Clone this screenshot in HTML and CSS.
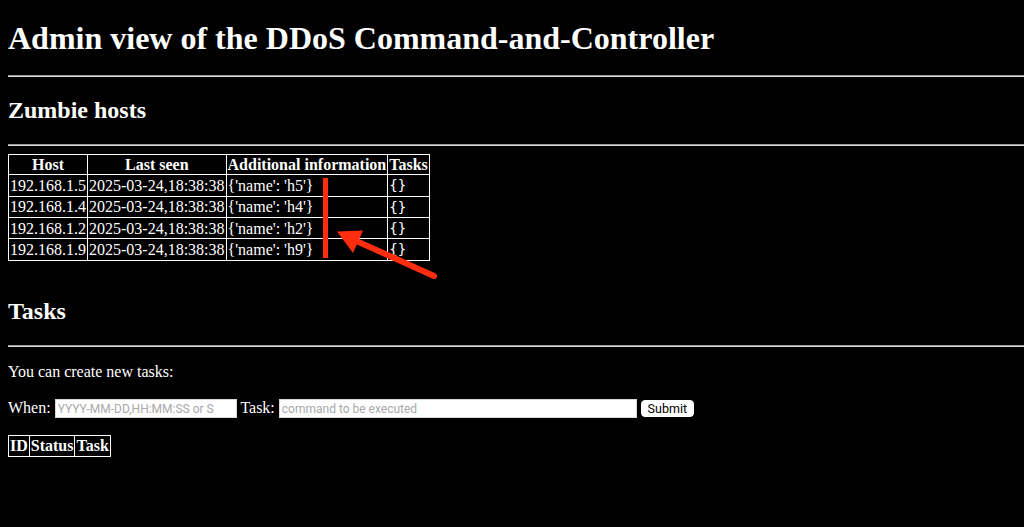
FILE: index.html
```html
<!DOCTYPE html>
<html>
<head>
<meta charset="utf-8">
<title>Admin view</title>
<link rel="stylesheet" href="styles.css">
</head>
<body>
<h1 class="title">Admin view of the DDoS Command-and-Controller</h1>
<hr class="rule">
<h2 class="section">Zumbie hosts</h2>
<hr class="rule">
<table class="grid hosts">
  <tr><th>Host</th><th>Last seen</th><th>Additional information</th><th>Tasks</th></tr>
  <tr><td>192.168.1.5</td><td>2025-03-24,18:38:38</td><td>{'name': 'h5'}</td><td><span class="braces">{}</span></td></tr>
  <tr><td>192.168.1.4</td><td>2025-03-24,18:38:38</td><td>{'name': 'h4'}</td><td><span class="braces">{}</span></td></tr>
  <tr><td>192.168.1.2</td><td>2025-03-24,18:38:38</td><td>{'name': 'h2'}</td><td><span class="braces">{}</span></td></tr>
  <tr><td>192.168.1.9</td><td>2025-03-24,18:38:38</td><td>{'name': 'h9'}</td><td><span class="braces">{}</span></td></tr>
</table>
<h2 class="section tasks-title">Tasks</h2>
<hr class="rule">
<p class="para intro">You can create new tasks:</p>
<form class="para task-form">
  <label>When: <input class="field when" type="text" placeholder="YYYY-MM-DD,HH:MM:SS or S"></label>
  <label>Task: <input class="field task" type="text" placeholder="command to be executed"></label>
  <button class="submit" type="button">Submit</button>
</form>
<table class="grid">
  <tr><th>ID</th><th>Status</th><th>Task</th></tr>
</table>
<svg class="annotation" width="1024" height="527" viewBox="0 0 1024 527" xmlns="http://www.w3.org/2000/svg">
  <line x1="325.5" y1="178" x2="325.5" y2="258" stroke="#ff2d0f" stroke-width="5"/>
  <line x1="434" y1="276" x2="352" y2="239" stroke="#ff2d0f" stroke-width="6" stroke-linecap="round"/>
  <polygon points="337,231.5 363,230.5 353,253" fill="#ff2d0f"/>
</svg>
</body>
</html>
```
FILE: styles.css
```css
html, body {
  background: #000;
}
body {
  margin: 0 0 8px 8px;
  padding: 0;
  color: #fff;
  font-family: "Liberation Serif", "Times New Roman", serif;
  font-size: 16px;
}
.title {
  font-size: 32px;
  line-height: 32px;
  margin: 21.44px 0;
  padding-top: 0.1px;
  font-weight: bold;
}
.section {
  font-size: 24px;
  line-height: 27px;
  margin: 19.92px 0;
  font-weight: bold;
}
.tasks-title {
  margin-top: 37px;
}
.rule {
  display: block;
  margin: 8px 0;
  border: 0;
  border-top: 1px solid #9a9a9a;
  border-bottom: 1px solid #d8d8d8;
  height: 0;
}
.grid {
  border-collapse: collapse;
}
.grid th, .grid td {
  border: 1px solid #fff;
  padding: 1px;
  line-height: 18px;
  color: #fff;
}
.grid th {
  font-weight: bold;
  text-align: center;
}
.grid td {
  text-align: left;
}
.hosts th, .hosts td {
  line-height: 17.4px;
}
.braces {
  color: #fff;
  font-family: "DejaVu Sans Mono", "Liberation Mono", monospace;
  font-size: 14px;
}
.para {
  margin: 16px 0;
  line-height: 18px;
}
.task-form {
  display: block;
  margin-top: 18px;
  margin-bottom: 17px;
}
.field {
  font-family: Roboto, "Liberation Sans", Arial, sans-serif;
  font-size: 12px;
  height: 19px;
  box-sizing: border-box;
  padding: 1px 2px;
  border: 1px solid #d6d6d6;
  background: #fff;
  color: #000;
  vertical-align: baseline;
  outline: none;
}
.field::placeholder {
  color: #a9a9a9;
}
.field.when {
  width: 182px;
}
.field.task {
  width: 358px;
}
.submit {
  font-family: Roboto, "Liberation Sans", Arial, sans-serif;
  font-size: 12.5px;
  height: 17px;
  width: 53px;
  padding: 0 4px;
  border: 1px solid #fff;
  border-radius: 4px;
  background: #fff;
  color: #000;
  line-height: 15px;
  vertical-align: baseline;
}
.annotation {
  position: absolute;
  left: 0;
  top: 0;
  pointer-events: none;
}
```
